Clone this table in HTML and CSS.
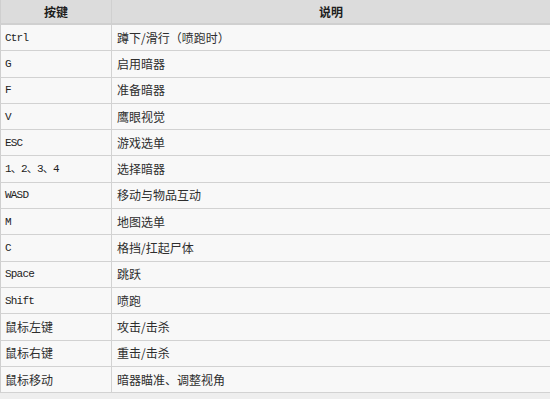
FILE: index.html
```html
<!DOCTYPE html>
<html lang="zh-CN">
<head>
<meta charset="utf-8">
<title>按键说明</title>
<link rel="stylesheet" href="styles.css">
</head>
<body>
<table class="keys">
  <thead>
    <tr class="head-row"><th class="c1">按键</th><th class="c2">说明</th></tr>
  </thead>
  <tbody>
    <tr><td class="c1 mono">Ctrl</td><td class="c2">蹲下/滑行（喷跑时）</td></tr>
    <tr><td class="c1 mono">G</td><td class="c2">启用暗器</td></tr>
    <tr><td class="c1 mono">F</td><td class="c2">准备暗器</td></tr>
    <tr><td class="c1 mono">V</td><td class="c2">鹰眼视觉</td></tr>
    <tr><td class="c1 mono">ESC</td><td class="c2">游戏选单</td></tr>
    <tr><td class="c1 mono">1、2、3、4</td><td class="c2">选择暗器</td></tr>
    <tr><td class="c1 mono">WASD</td><td class="c2">移动与物品互动</td></tr>
    <tr><td class="c1 mono">M</td><td class="c2">地图选单</td></tr>
    <tr><td class="c1 mono">C</td><td class="c2">格挡/扛起尸体</td></tr>
    <tr><td class="c1 mono">Space</td><td class="c2">跳跃</td></tr>
    <tr><td class="c1 mono">Shift</td><td class="c2">喷跑</td></tr>
    <tr><td class="c1">鼠标左键</td><td class="c2">攻击/击杀</td></tr>
    <tr><td class="c1">鼠标右键</td><td class="c2">重击/击杀</td></tr>
    <tr><td class="c1">鼠标移动</td><td class="c2">暗器瞄准、调整视角</td></tr>
  </tbody>
</table>
</body>
</html>
```

FILE: styles.css
```css
html, body {
  margin: 0;
  padding: 0;
  background: #eeeeee;
}

.keys {
  width: 550px;
  border-collapse: separate;
  border-spacing: 0;
  background: #f8f8f8;
  font-family: "Noto Sans CJK SC", "Liberation Sans", sans-serif;
  font-size: 12px;
  color: #2e2e2e;
  table-layout: fixed;
}

.keys th,
.keys td {
  box-sizing: border-box;
  padding: 0 0 0 4px;
  border-bottom: 1px solid #d2d2d2;
  vertical-align: middle;
  line-height: 14px;
  white-space: nowrap;
}

.keys tr {
  height: 26.3px;
}

.keys .head-row {
  height: 25px;
}

.keys th {
  background: #dcdcdc;
  font-weight: bold;
  color: #1e1e1e;
  text-align: center;
  padding: 0;
  border-bottom: 2px solid #d0d0d0;
}

.keys .c1 {
  width: 112px;
  border-left: 1px solid #cfcfcf;
  border-right: 1px solid #d2d2d2;
}

.keys th.c1 {
  border-right: 1px solid #d0d0d0;
}

.keys td.c2 {
  padding-left: 5px;
}

.keys .mono {
  font-family: "Liberation Mono", "Noto Sans CJK SC", monospace;
  font-size: 11px;
  letter-spacing: -0.8px;
  color: #222222;
}
```
